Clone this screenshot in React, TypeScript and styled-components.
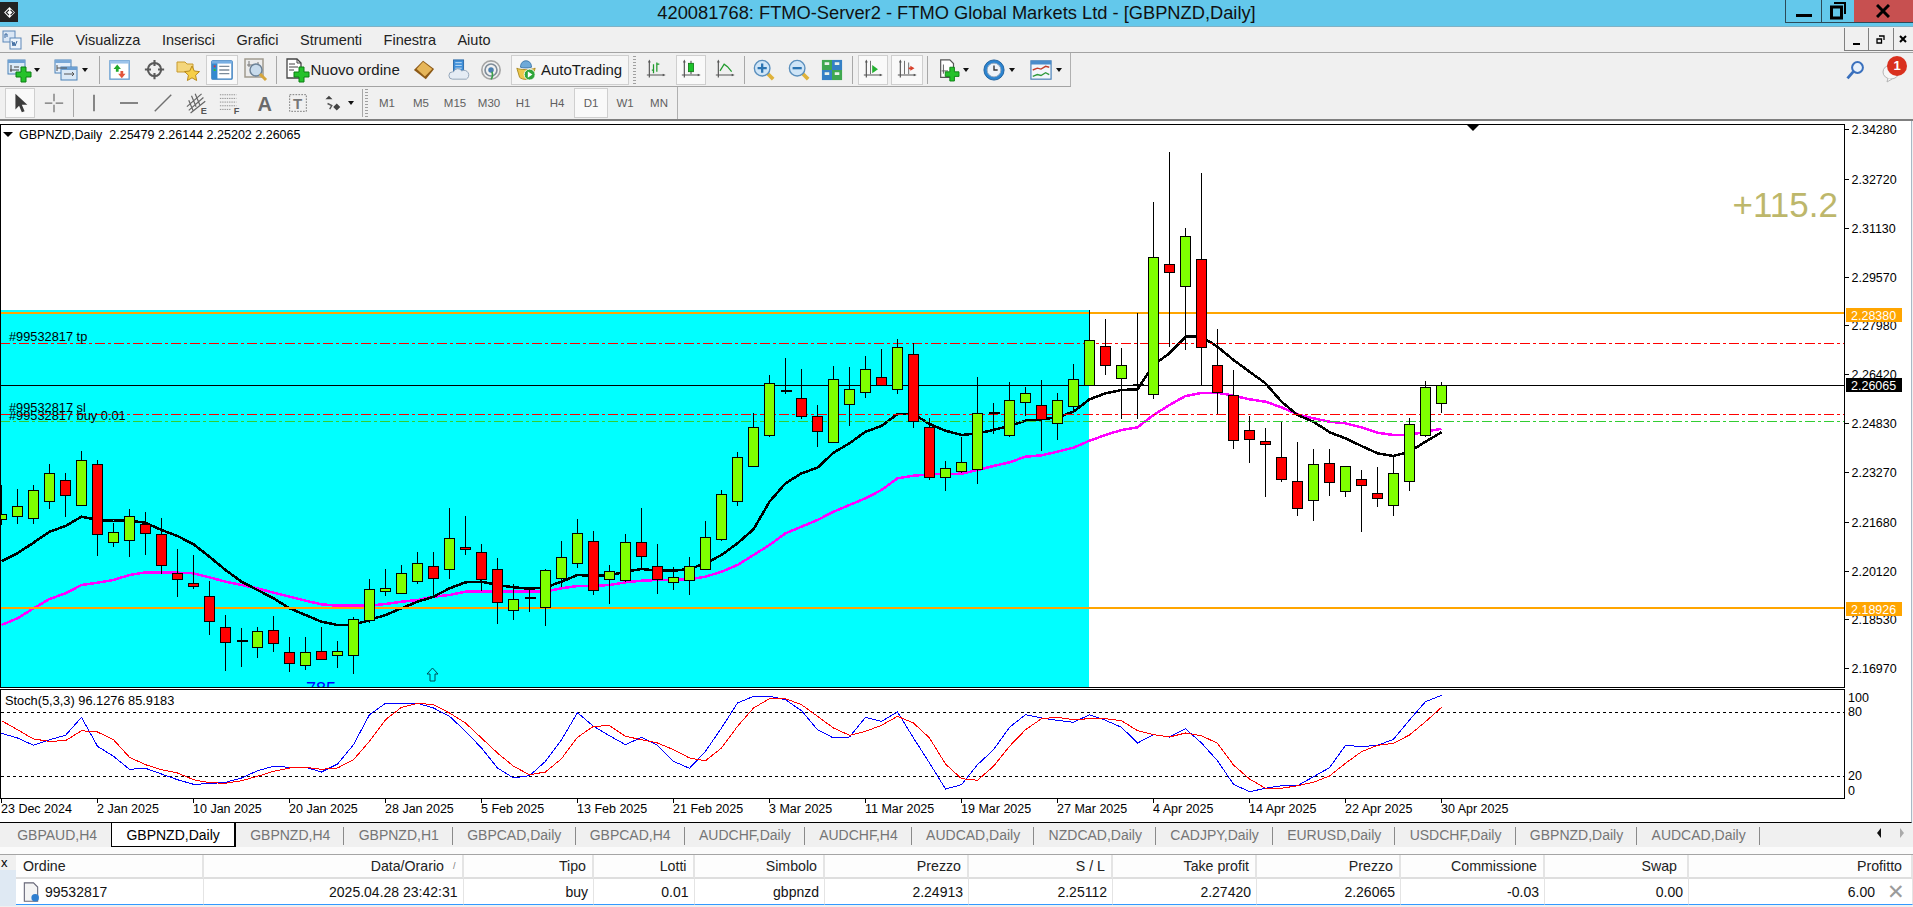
import React from 'react'
import styled, { createGlobalStyle } from 'styled-components'

const GlobalStyle = createGlobalStyle`
  html, body {
    margin: 0;
    padding: 0;
    width: 1913px;
    height: 907px;
    overflow: hidden;
    background: #f0f0f0;
    font-family: "Liberation Sans", Arial, sans-serif;
  }
  * { box-sizing: border-box; }
`

/* data was read off the chart, y = 300 + v / 3 */
type Candle = ['g' | 'r' | 'd', number, number, number, number]
const CANDLES: Candle[] = [
  ['g', 643, 656, 555, 675], ['g', 619, 649, 567, 672], ['g', 571, 655, 555, 672], ['g', 520, 604, 491, 628],
  ['r', 541, 586, 519, 651], ['g', 481, 616, 453, 616], ['r', 493, 703, 480, 768], ['g', 697, 727, 668, 741],
  ['g', 649, 721, 627, 771], ['r', 673, 700, 636, 765], ['r', 703, 796, 654, 822], ['r', 820, 838, 747, 891],
  ['r', 850, 859, 765, 866], ['r', 889, 964, 843, 1006], ['r', 982, 1027, 945, 1113], ['d', 1024, 1024, 984, 1101],
  ['g', 994, 1042, 981, 1074], ['r', 991, 1030, 948, 1056], ['r', 1057, 1090, 1011, 1116], ['g', 1057, 1096, 1011, 1110],
  ['r', 1054, 1078, 981, 1080], ['g', 1054, 1066, 1023, 1104], ['g', 958, 1066, 951, 1122], ['g', 868, 961, 837, 969],
  ['g', 865, 874, 807, 888], ['g', 820, 880, 795, 882], ['g', 790, 844, 756, 852], ['r', 799, 835, 756, 886],
  ['g', 715, 808, 624, 837], ['r', 742, 748, 648, 765], ['r', 757, 838, 732, 874], ['r', 808, 907, 774, 972],
  ['g', 898, 931, 853, 960], ['d', 894, 894, 860, 936], ['g', 811, 922, 808, 978], ['g', 772, 835, 723, 860],
  ['g', 700, 790, 657, 803], ['r', 724, 871, 693, 885], ['g', 814, 838, 795, 912], ['g', 727, 841, 702, 845],
  ['r', 727, 769, 624, 811], ['r', 799, 838, 732, 881], ['g', 832, 847, 801, 869], ['g', 799, 841, 771, 884],
  ['g', 712, 808, 663, 810], ['g', 583, 718, 570, 722], ['g', 472, 604, 457, 617], ['g', 382, 499, 340, 500],
  ['g', 250, 406, 225, 410], ['d', 272, 272, 175, 282], ['r', 295, 349, 207, 356], ['r', 349, 394, 315, 440],
  ['g', 238, 427, 198, 428], ['g', 268, 313, 201, 378], ['g', 208, 277, 168, 294], ['r', 232, 254, 148, 256],
  ['g', 142, 268, 117, 282], ['r', 163, 364, 130, 384], ['r', 382, 532, 355, 540], ['g', 505, 532, 484, 573],
  ['g', 487, 514, 412, 518], ['g', 340, 508, 232, 552], ['d', 339, 339, 309, 401], ['g', 301, 406, 247, 410],
  ['g', 280, 307, 262, 347], ['r', 316, 358, 241, 453], ['g', 301, 370, 280, 420], ['g', 238, 319, 193, 335],
  ['g', 121, 256, 30, 256], ['r', 139, 196, 57, 224], ['g', 196, 235, 144, 357], ['d', 254, 254, 38, 356],
  ['g', -128, 283, -294, 296], ['r', -107, -83, -444, 142], ['g', -191, -41, -216, 150], ['r', -122, 142, -380, 256],
  ['r', 196, 277, 87, 343], ['r', 286, 421, 210, 447], ['r', 391, 416, 348, 488], ['r', 423, 431, 385, 590],
  ['r', 472, 538, 365, 545], ['r', 544, 625, 427, 647], ['g', 493, 601, 447, 662], ['r', 490, 547, 447, 587],
  ['g', 499, 574, 499, 590], ['r', 538, 556, 511, 695], ['r', 580, 595, 501, 620], ['g', 520, 616, 467, 647],
  ['g', 373, 544, 355, 573], ['g', 262, 406, 244, 410], ['g', 256, 310, 247, 340],
]

const MA_FAST = [
  784, 760, 728, 695, 678, 650, 660, 662, 662, 668, 690, 708, 733, 770, 810, 845, 870, 895, 925, 945,
  965, 975, 975, 960, 945, 925, 905, 890, 865, 847, 845, 855, 862, 866, 862, 845, 825, 828, 826, 815,
  807, 812, 812, 807, 790, 765, 730, 688, 605, 550, 520, 503, 458, 430, 395, 378, 342, 342, 372, 392,
  405, 400, 390, 377, 362, 358, 352, 335, 298, 280, 270, 268, 195, 160, 110, 110, 140, 180, 215, 250,
  305, 345, 365, 397, 415, 438, 460, 468, 455, 425, 397,
]
const MA_SLOW = [
  975, 955, 925, 897, 880, 855, 848, 840, 825, 817, 817, 818, 820, 832, 845, 855, 865, 878, 890, 902,
  913, 917, 917, 917, 912, 905, 900, 890, 885, 875, 875, 875, 875, 875, 875, 865, 858, 858, 855, 847,
  842, 840, 840, 838, 830, 815, 795, 765, 735, 700, 680, 660, 635, 615, 595, 570, 535, 527, 523, 522,
  521, 510, 498, 487, 470, 466, 455, 443, 422, 405, 390, 382, 345, 315, 288, 279, 278, 287, 298, 305,
  322, 343, 355, 365, 370, 382, 398, 405, 405, 395, 386,
]

/* stochastic, y = 688 + v / 3 */
const STOCH_K = [
  136, 150, 172, 155, 142, 88, 175, 205, 244, 241, 258, 275, 289, 287, 283, 270, 248, 235, 238, 238,
  252, 228, 170, 80, 46, 46, 46, 60, 85, 130, 180, 240, 270, 263, 220, 155, 74, 115,
  143, 170, 148, 172, 220, 241, 190, 120, 45, 25, 25, 35, 68, 125, 150, 147, 88, 100, 72, 150,
  225, 303, 290, 230, 185, 118, 80, 90, 97, 103, 80, 97, 118, 165, 140, 147, 122, 165,
  218, 289, 311, 301, 293, 293, 266, 239, 172, 176, 172, 154, 96, 41, 22,
]
const STOCH_D = [
  98, 125, 153, 160, 158, 128, 132, 155, 208, 230, 245, 255, 275, 284, 286, 278, 265, 250, 240, 238,
  244, 240, 215, 160, 95, 58, 46, 50, 75, 105, 150, 195, 235, 260, 252, 212, 148, 115,
  113, 145, 155, 165, 185, 210, 218, 180, 115, 60, 32, 32, 50, 85, 120, 142, 130, 112, 85, 105,
  150, 228, 272, 277, 235, 175, 125, 92, 88, 95, 92, 92, 98, 128, 140, 147, 135, 143,
  166, 231, 273, 301, 301, 293, 283, 264, 226, 191, 172, 166, 141, 101, 58,
]

const PRICE_TICKS: [string, number][] = [
  ['2.34280', 129], ['2.32720', 179], ['2.31130', 228], ['2.29570', 277], ['2.27980', 325], ['2.26420', 374],
  ['2.24830', 423], ['2.23270', 472], ['2.21680', 522], ['2.20120', 571], ['2.18530', 619], ['2.16970', 668],
]
const PRICE_TAGS: [string, number, string][] = [
  ['2.28380', 308, '#ffa500'], ['2.26065', 378, '#000'], ['2.18926', 602, '#ffa500'],
]
const DATES = [
  '23 Dec 2024', '2 Jan 2025', '10 Jan 2025', '20 Jan 2025', '28 Jan 2025', '5 Feb 2025', '13 Feb 2025', '21 Feb 2025',
  '3 Mar 2025', '11 Mar 2025', '19 Mar 2025', '27 Mar 2025', '4 Apr 2025', '14 Apr 2025', '22 Apr 2025', '30 Apr 2025',
]
const MENU = ['File', 'Visualizza', 'Inserisci', 'Grafici', 'Strumenti', 'Finestra', 'Aiuto']
const TIMEFRAMES = ['M1', 'M5', 'M15', 'M30', 'H1', 'H4', 'D1', 'W1', 'MN']
const TABS = [
  'GBPAUD,H4', 'GBPNZD,Daily', 'GBPNZD,H4', 'GBPNZD,H1', 'GBPCAD,Daily', 'GBPCAD,H4', 'AUDCHF,Daily', 'AUDCHF,H4',
  'AUDCAD,Daily', 'NZDCAD,Daily', 'CADJPY,Daily', 'EURUSD,Daily', 'USDCHF,Daily', 'GBPNZD,Daily', 'AUDCAD,Daily',
]
const COLUMNS = [
  { title: 'Ordine', w: 188, left: true },
  { title: 'Data/Orario', w: 259.5, value: '2025.04.28 23:42:31' },
  { title: 'Tipo', w: 130.5, value: 'buy' },
  { title: 'Lotti', w: 100.5, value: '0.01' },
  { title: 'Simbolo', w: 130.5, value: 'gbpnzd' },
  { title: 'Prezzo', w: 144, value: '2.24913' },
  { title: 'S / L', w: 144, value: '2.25112' },
  { title: 'Take profit', w: 144, value: '2.27420' },
  { title: 'Prezzo', w: 144, value: '2.26065' },
  { title: 'Commissione', w: 144, value: '-0.03' },
  { title: 'Swap', w: 144, value: '0.00' },
  { title: 'Profitto', w: 224, value: '6.00' },
]

const candleX = (i: number) => 1.5 + 16 * i
const py = (v: number) => Math.round(300 + v / 3)
const linePoints = (values: number[], base: number) =>
  values.map((v, i) => `${candleX(i)},${(base + v / 3).toFixed(1)}`).join(' ')

const Page = styled.div`
  width: 1913px;
  height: 907px;
  display: flex;
  flex-direction: column;
  overflow: hidden;
  background: #f0f0f0;
  color: #000;
`

const TitleBar = styled.div`
  height: 27px;
  display: grid;
  grid-template-columns: 128px 1fr 128px;
  background: #63c8eb;
  border-bottom: 1px solid #7fb2c6;
`
const AppBadge = styled.div`
  width: 18px;
  height: 20px;
  margin-top: 2px;
  background: #222;
  display: flex;
  align-items: center;
  justify-content: center;
`
const TitleText = styled.div`
  text-align: center;
  font-size: 18.3px;
  line-height: 26px;
  color: #111;
  white-space: nowrap;
`
const WinButtons = styled.div`
  display: flex;
  height: 23px;
`
const WinButton = styled.div<{ $w: number; $close?: boolean }>`
  width: ${p => p.$w}px;
  display: flex;
  align-items: center;
  justify-content: center;
  background: ${p => (p.$close ? '#c75050' : 'transparent')};
  border-bottom: 1px solid #2c4a58;
  border-left: ${p => (p.$close ? 'none' : '1px solid #2c4a58')};
`

const MenuBar = styled.div`
  height: 26px;
  display: flex;
  align-items: center;
  padding-left: 2px;
  border-bottom: 1px solid #a3a3a3;
`
const MenuItems = styled.div`
  display: flex;
  gap: 21.5px;
  margin-left: 8.5px;
  font-size: 14.5px;
  color: #222;
`
const MdiButtons = styled.div`
  display: flex;
  margin-left: auto;
  align-self: flex-start;
  height: 23px;
  margin-top: 1px;
`
const MdiButton = styled.div<{ $w: number }>`
  width: ${p => p.$w}px;
  display: flex;
  align-items: center;
  justify-content: center;
  border: 1px solid #808080;
  border-top: none;
  border-right: none;
`

const ToolRow = styled.div`
  height: 34px;
  display: flex;
`
const ToolRowLast = styled(ToolRow)`
  border-bottom: 2px solid #7f7f7f;
`
const Band = styled.div<{ $w: number; $line?: boolean }>`
  width: ${p => p.$w}px;
  display: flex;
  align-items: center;
  padding-left: 3px;
  border-right: 1px solid #b0b0b0;
  border-bottom: ${p => (p.$line ? '1px solid #a3a3a3' : 'none')};
`
const ToolIcon = styled.div<{ $w: number; $ml?: number; $active?: boolean }>`
  width: ${p => p.$w}px;
  height: 30px;
  margin-left: ${p => p.$ml ?? 0}px;
  flex: none;
  display: flex;
  align-items: center;
  justify-content: center;
  background: ${p => (p.$active ? '#f9f9f9' : 'transparent')};
  border: 1px solid ${p => (p.$active ? '#cfcfcf' : 'transparent')};
`
const DropTool = styled(ToolIcon)<{ $pl: number; $gap: number }>`
  justify-content: flex-start;
  padding-left: ${p => p.$pl}px;
  gap: ${p => p.$gap}px;
  border: none;
`
const Caret = styled.span`
  width: 0;
  height: 0;
  flex: none;
  border-left: 3.5px solid transparent;
  border-right: 3.5px solid transparent;
  border-top: 4px solid #111;
`
const Sep = styled.div<{ $ml?: number }>`
  width: 1px;
  height: 28px;
  flex: none;
  margin-left: ${p => p.$ml ?? 0}px;
  background: #a8a8a8;
`
const Grip = styled.div<{ $ml?: number }>`
  width: 3px;
  height: 28px;
  flex: none;
  margin-left: ${p => p.$ml ?? 0}px;
  background: repeating-linear-gradient(to bottom, #a0a0a0 0 1px, transparent 1px 3px);
`
const OrderButton = styled.div`
  width: 125.5px;
  height: 30px;
  flex: none;
  display: flex;
  align-items: center;
  gap: 2px;
  padding-left: 8px;
  font-size: 15px;
  color: #1a1a1a;
  white-space: nowrap;
`
const AutoButton = styled.div`
  width: 117.5px;
  height: 30px;
  flex: none;
  display: flex;
  align-items: center;
  gap: 4px;
  padding-left: 3px;
  font-size: 15px;
  color: #1a1a1a;
  background: #f6f6f6;
  border: 1px solid #cfcfcf;
`
const RightTools = styled.div`
  margin-left: auto;
  display: flex;
  align-items: center;
  gap: 17px;
  padding-right: 5px;
`
const ChatBadge = styled.div`
  position: relative;
  width: 26px;
  height: 26px;
`
const ChatCount = styled.span`
  position: absolute;
  right: 1px;
  top: -1px;
  width: 20px;
  height: 20px;
  border-radius: 50%;
  background: #d9301e;
  color: #fff;
  font-size: 13px;
  font-weight: bold;
  line-height: 20px;
  text-align: center;
`
const TimeframeButton = styled.div<{ $active?: boolean }>`
  width: 34px;
  height: 30px;
  flex: none;
  display: flex;
  align-items: center;
  justify-content: center;
  font-size: 11.5px;
  color: #5f5f5f;
  background: ${p => (p.$active ? '#f9f9f9' : 'transparent')};
  border: 1px solid ${p => (p.$active ? '#cfcfcf' : 'transparent')};
`
const TimeframeGroup = styled.div`
  display: flex;
  margin-left: 2px;
`

const ChartWindow = styled.div`
  width: 1912px;
  height: 702px;
  flex: none;
  padding-top: 3px;
  background: #fff;
  border-bottom: 1.5px solid #000;
  border-right: 1px solid #a9bac6;
`
const Pane = styled.div<{ $h: number; $mt?: number }>`
  height: ${p => p.$h}px;
  margin-top: ${p => p.$mt ?? 0}px;
  display: flex;
`
const Plot = styled.svg`
  width: 1845px;
  height: 100%;
  flex: none;
  display: block;
`
const Axis = styled.svg`
  width: 66px;
  height: 100%;
  flex: none;
  display: block;
`
const ChartText = styled.text`
  font-family: "Liberation Sans", Arial, sans-serif;
  font-size: 12.5px;
  fill: #000;
  white-space: pre;
`
const OrderText = styled(ChartText)`
  font-size: 12.8px;
`
const BigText = styled(ChartText)`
  font-size: 35px;
  fill: #bdb76b;
`
const TimeAxis = styled.div`
  display: flex;
  height: 24px;
`
const TimeLabel = styled.div`
  width: 96px;
  flex: none;
  position: relative;
  padding: 3px 0 0 1px;
  font-size: 12.5px;
  white-space: nowrap;
  &::before {
    content: '';
    position: absolute;
    left: 1px;
    top: 0;
    width: 1px;
    height: 4px;
    background: #000;
  }
`

const TabBar = styled.div`
  height: 24px;
  flex: none;
  display: flex;
  padding-left: 3px;
  background: #f0f0f0;
`
const Tab = styled.div<{ $active?: boolean; $sep?: boolean }>`
  flex: none;
  padding: 0 14.2px;
  position: relative;
  font-size: 14px;
  line-height: 24px;
  white-space: nowrap;
  color: ${p => (p.$active ? '#000' : '#757575')};
  background: ${p => (p.$active ? '#fff' : 'transparent')};
  border: ${p => (p.$active ? '1px solid #000' : 'none')};
  border-top: none;
  border-right-width: ${p => (p.$active ? '2px' : '0')};
  &::after {
    content: '';
    display: ${p => (p.$sep ? 'block' : 'none')};
    position: absolute;
    right: 0;
    top: 4px;
    width: 1px;
    height: 18px;
    background: #8a8a8a;
  }
`
const TabArrows = styled.div`
  margin-left: auto;
  display: flex;
  align-items: center;
  gap: 19px;
  padding: 0 9px 4px 0;
`
const TabArrow = styled.span<{ $dir: 'left' | 'right' }>`
  width: 0;
  height: 0;
  border-top: 5px solid transparent;
  border-bottom: 5px solid transparent;
  ${p => (p.$dir === 'left' ? 'border-right: 4px solid #111;' : 'border-left: 4px solid #aaa;')}
`
const TabGap = styled.div`
  height: 7px;
  flex: none;
  background: #fbfbfb;
`

const TerminalPanel = styled.div`
  height: 52px;
  flex: none;
  display: flex;
  border-top: 1.5px solid #a5a5a5;
`
const SideStrip = styled.div`
  width: 16px;
  flex: none;
  display: flex;
  flex-direction: column;
  background: #f0f0f0;
`
const SideClose = styled.div`
  height: 15px;
  padding: 1px 0 0 1px;
  font-size: 13px;
  line-height: 13px;
`
const SideFill = styled.div`
  flex: 1;
  background: #dfe9f3;
`
const OrdersGrid = styled.div`
  flex: 1;
  display: grid;
  grid-template-columns: ${COLUMNS.map(c => `${c.w}px`).join(' ')};
  grid-template-rows: 24px 26px;
`
const HeadCell = styled.div<{ $left?: boolean; $pr?: number }>`
  display: flex;
  align-items: center;
  justify-content: ${p => (p.$left ? 'flex-start' : 'flex-end')};
  gap: 9px;
  padding: ${p => (p.$left ? '0 0 0 7px' : `0 ${p.$pr ?? 6}px 0 0`)};
  font-size: 14.2px;
  color: #222;
  background: #fdfdfd;
  border-right: 2px solid #e4e4e4;
  border-bottom: 2px solid #dedede;
`
const SortMark = styled.span`
  font-size: 9px;
  color: #777;
`
const RowCell = styled.div<{ $left?: boolean; $pr?: number }>`
  display: flex;
  align-items: center;
  justify-content: ${p => (p.$left ? 'flex-start' : 'flex-end')};
  gap: 4px;
  padding: ${p => (p.$left ? '0 0 0 5px' : `0 ${p.$pr ?? 5}px 0 0`)};
  font-size: 14px;
  color: #111;
  background: #fff;
  border-right: 1px solid #e4e4e4;
  border-bottom: 1.5px solid #3399ff;
`
const CloseMark = styled.span`
  margin-left: 8px;
  font-size: 21px;
  line-height: 20px;
  color: #9b9b9b;
`

const Ic = ({ size = 22, children }: { size?: number; children: React.ReactNode }) => (
  <svg width={size} height={size} viewBox="0 0 24 24" style={{ flex: 'none', display: 'block', overflow: 'visible' }}>
    {children}
  </svg>
)

const Plus = ({ x, y }: { x: number; y: number }) => (
  <path d={`M${x + 5} ${y}h5v5h5v5h-5v5h-5v-5h-5v-5h5z`} fill="#25c22b" stroke="#0c7f14" strokeWidth="1" />
)
const Axes = () => (
  <path d="M4 1v20M1 18h21M3 3l1-2 1 2M20 17l2 1-2 1" fill="none" stroke="#555" strokeWidth="1.4" />
)

const NewChartIcon = () => (
  <Ic size={24}>
    <rect x="1" y="2" width="17" height="14" fill="#dceaf7" stroke="#4a81b8" />
    <rect x="1" y="2" width="17" height="3" fill="#6da0d3" />
    <path d="M4 7v7M3 12h9M7 9h5" stroke="#444" fill="none" />
    <Plus x={9} y={9} />
  </Ic>
)
const ProfilesIcon = () => (
  <Ic size={24}>
    <rect x="1" y="2" width="16" height="13" fill="#e5effa" stroke="#4a81b8" />
    <rect x="1" y="2" width="16" height="3" fill="#7aa9d8" />
    <rect x="7" y="9" width="16" height="13" fill="#dbe9f6" stroke="#4a81b8" />
    <rect x="7" y="9" width="16" height="3" fill="#6da0d3" />
    <path d="M3 7v6M3 10h10M10 16h10M18 14l2 2-2 2" fill="none" stroke="#555" />
  </Ic>
)
const MarketWatchIcon = () => (
  <Ic>
    <rect x="1" y="2" width="21" height="20" fill="#fff" stroke="#6aa0d2" strokeWidth="1.5" />
    <rect x="1" y="2" width="21" height="3" fill="#9cc3ea" />
    <path d="M9 6l4 5h-2.5v3h-3v-3H5z" fill="#21a92b" />
    <path d="M14 21l-4-5h2.5v-3h3v3H18z" fill="#e2553b" />
  </Ic>
)
const NavigatorIcon = () => (
  <Ic size={21}>
    <circle cx="12" cy="12" r="7.5" fill="none" stroke="#595959" strokeWidth="2.4" />
    <path d="M12 1v7M12 16v7M1 12h7M16 12h7" stroke="#595959" strokeWidth="2.4" />
  </Ic>
)
const FavoritesIcon = () => (
  <Ic size={24}>
    <path d="M1 4h8l2 2h6v8H1z" fill="#f4d67c" stroke="#c79a2f" />
    <path d="M16 8l2.3 5 5.2.6-3.9 3.6 1 5.3-4.6-2.7-4.6 2.7 1-5.3-3.9-3.6 5.2-.6z" fill="#f7cf47" stroke="#b98a1d" />
  </Ic>
)
const TerminalIcon = () => (
  <Ic>
    <rect x="1" y="2" width="22" height="20" rx="1" fill="#fff" stroke="#2f78bd" strokeWidth="1.5" />
    <rect x="1" y="2" width="6" height="20" fill="#3489cf" />
    <rect x="1" y="2" width="22" height="3" fill="#77aee2" />
    <path d="M9 8h11M9 12h11M9 16h11" stroke="#7c8b99" strokeWidth="1.5" />
    <path d="M4 7v2" stroke="#d33" strokeWidth="2" />
    <path d="M4 11v2" stroke="#2c2" strokeWidth="2" />
  </Ic>
)
const TesterIcon = () => (
  <Ic size={24}>
    <rect x="1" y="1" width="18" height="18" fill="#ececec" stroke="#a09a8e" strokeWidth="1.5" />
    <path d="M5 3v6M3 7h7M14 4v3" stroke="#777" />
    <circle cx="12" cy="12" r="6" fill="#c8dbec" stroke="#6d8398" strokeWidth="1.5" />
    <path d="M16 16l6 6" stroke="#d6a63b" strokeWidth="3" />
  </Ic>
)
const OrderIcon = () => (
  <Ic size={24}>
    <path d="M2 1h10l4 4v15H2z" fill="#fff" stroke="#444" strokeWidth="1.3" />
    <path d="M12 1v4h4M4 6h6M4 9h9M4 12h5" fill="none" stroke="#444" />
    <Plus x={9} y={9} />
  </Ic>
)
const EditorIcon = () => (
  <Ic>
    <path d="M1 12L11 2l12 9-9 11z" fill="#8d5a17" />
    <path d="M4 11l7-8 10 8-8 8z" fill="#e6b65a" />
  </Ic>
)
const CloudIcon = () => (
  <Ic>
    <rect x="6" y="1" width="11" height="14" fill="#3f8fd8" stroke="#2b6aa8" />
    <path d="M8 4h7M8 7h7M8 10h7" stroke="#c9e3fa" />
    <path d="M5 22a4 4 0 010-8h1a5 5 0 019-1 5 5 0 015 9z" fill="#e5ecf4" stroke="#8da0b5" />
  </Ic>
)
const SignalsIcon = () => (
  <Ic>
    <circle cx="12" cy="12" r="10" fill="none" stroke="#a5a5a5" strokeWidth="1.8" />
    <circle cx="12" cy="12" r="6.5" fill="none" stroke="#7f8c99" strokeWidth="1.8" />
    <circle cx="12" cy="12" r="3" fill="#4b7fb0" />
    <path d="M13 14c1 3 1 6-1 8" fill="none" stroke="#3aa048" strokeWidth="1.8" />
  </Ic>
)
const AutoTradingIcon = () => (
  <Ic>
    <path d="M2 10c3 2 16 2 20 0l-3 10c-3 3-11 3-14 0z" fill="#edc84a" stroke="#a98820" />
    <path d="M6 9c0-5 3-7 6-7s6 2 6 7c-3 1-9 1-12 0z" fill="#6ea9d8" stroke="#3f79ab" />
    <circle cx="16" cy="17" r="6" fill="#2fa53a" stroke="#fff" />
    <path d="M14 13.5l5 3.5-5 3.5z" fill="#fff" />
  </Ic>
)
const BarsIcon = () => (
  <Ic size={20}>
    <Axes />
    <path d="M9 5v11M9 12h-2M13 3v11M13 5h3" stroke="#1f9a2b" strokeWidth="1.5" fill="none" />
  </Ic>
)
const CandleIcon = () => (
  <Ic size={20}>
    <Axes />
    <path d="M12 1v16" stroke="#222" />
    <rect x="9" y="4" width="6" height="10" fill="#1bc229" stroke="#0d7a15" />
  </Ic>
)
const LineIcon = () => (
  <Ic size={20}>
    <Axes />
    <path d="M6 13l5-8 4 3 5 6" fill="none" stroke="#1f9a2b" strokeWidth="1.5" />
  </Ic>
)
const ZoomIcon = ({ plus }: { plus?: boolean }) => (
  <Ic>
    <path d="M15 15l7 7" stroke="#dfb23b" strokeWidth="4" />
    <circle cx="10" cy="10" r="8.5" fill="#cfe5f7" stroke="#5a8fbd" strokeWidth="1.5" />
    <path d={plus ? 'M5 10h10M10 5v10' : 'M5 10h10'} stroke="#2b74b2" strokeWidth="2.5" />
  </Ic>
)
const TileIcon = () => (
  <Ic>
    <rect x="1" y="1" width="11" height="11" fill="#3fa850" />
    <rect x="12" y="1" width="11" height="11" fill="#3480c5" />
    <rect x="1" y="12" width="11" height="11" fill="#3480c5" />
    <rect x="12" y="12" width="11" height="11" fill="#3fa850" />
    <path d="M4 5h5M15 5h5M4 16h5M15 16h5" stroke="#e9f2ea" strokeWidth="3" />
  </Ic>
)
const ScrollIcon = () => (
  <Ic size={20}>
    <Axes />
    <path d="M9 1v16" stroke="#555" />
    <path d="M11 6l7 5-7 5z" fill="#25b232" />
  </Ic>
)
const ShiftIcon = () => (
  <Ic size={20}>
    <Axes />
    <path d="M9 1v16M14 3v14" stroke="#555" />
    <path d="M21 10l-5-3v2h-2v2h2v2z" fill="#d8402b" />
  </Ic>
)
const IndicatorsIcon = () => (
  <Ic>
    <path d="M4 1h10l4 4v15H4z" fill="#fff" stroke="#555" strokeWidth="1.3" />
    <path d="M7 6v10M5 13h7" fill="none" stroke="#555" />
    <Plus x={9} y={9} />
  </Ic>
)
const ClockIcon = () => (
  <Ic>
    <circle cx="12" cy="12" r="11" fill="#2c84d0" stroke="#1c5f9b" />
    <circle cx="12" cy="12" r="7.5" fill="#eef3f8" stroke="#9ab" />
    <path d="M12 7v5h4" fill="none" stroke="#333" strokeWidth="1.5" />
  </Ic>
)
const TemplateIcon = () => (
  <Ic>
    <rect x="1" y="2" width="22" height="20" fill="#f2f6fb" stroke="#4a81b8" strokeWidth="1.3" />
    <rect x="1" y="2" width="22" height="4" fill="#4a8ccb" />
    <path d="M3 12l5-2 4 1 5-3 4 1" fill="none" stroke="#c23c2a" strokeWidth="1.5" />
    <path d="M3 19l5-2 4 1 5-3 4 2" fill="none" stroke="#2f9a3c" strokeWidth="1.5" />
  </Ic>
)

const CursorIcon = () => (
  <Ic size={22}>
    <path d="M7 2v17l4-4 3 7 3-1-3-7h6z" fill="#3c3c3c" />
  </Ic>
)
const CrossIcon = () => (
  <Ic size={20}>
    <path d="M12 1v9M12 14v9M1 12h9M14 12h9" stroke="#707070" strokeWidth="1.5" />
  </Ic>
)
const VLineIcon = () => (
  <Ic size={20}>
    <path d="M12 2v20" stroke="#707070" strokeWidth="2" />
  </Ic>
)
const HLineIcon = () => (
  <Ic size={18}>
    <path d="M0 12h24" stroke="#606060" strokeWidth="2" />
  </Ic>
)
const TrendIcon = () => (
  <Ic size={18}>
    <path d="M1 23L23 1" stroke="#707070" strokeWidth="2" />
  </Ic>
)
const ChannelIcon = () => (
  <Ic size={22}>
    <path d="M1 16L17 2M3 20L19 6M5 23L21 10M6 4l5 12M10 2l5 12M3 9l5 12" stroke="#666" fill="none" strokeWidth="1.3" />
    <text x="16" y="24" fontSize="10" fontWeight="bold" fill="#555" fontFamily="Liberation Sans">E</text>
  </Ic>
)
const FiboIcon = () => (
  <Ic size={22}>
    <path d="M1 3h18M1 7h18M1 11h18M1 15h18M1 19h12" stroke="#8a8a8a" strokeDasharray="1.5 1" fill="none" />
    <text x="16" y="24" fontSize="10" fontWeight="bold" fill="#555" fontFamily="Liberation Sans">F</text>
  </Ic>
)
const TextToolIcon = () => (
  <Ic size={20}>
    <text x="3" y="21" fontSize="24" fontWeight="bold" fill="#6a6a6a" fontFamily="Liberation Sans">A</text>
  </Ic>
)
const LabelToolIcon = () => (
  <Ic size={20}>
    <rect x="2" y="2" width="20" height="20" fill="none" stroke="#666" strokeDasharray="2 1.5" />
    <text x="6" y="19" fontSize="18" fontWeight="bold" fill="#777" fontFamily="Liberation Sans">T</text>
  </Ic>
)
const ShapesIcon = () => (
  <Ic size={17}>
    <path d="M7 1l5 5H2zM18 12l5 5-5 5-5-5z" fill="#444" />
    <path d="M5 12l6 3-3 5" fill="none" stroke="#555" strokeWidth="2" />
  </Ic>
)
const SearchIcon = () => (
  <Ic size={20}>
    <circle cx="15" cy="9" r="6.5" fill="#e8f1fb" stroke="#3a70bd" strokeWidth="2.4" />
    <path d="M10 14l-7 8" stroke="#3a70bd" strokeWidth="3.4" />
  </Ic>
)

function PriceChart() {
  return (
    <Plot viewBox="0 124 1845 564">
      <rect x="0" y="310" width="1089" height="378" fill="#00ffff" />

      <polyline points={linePoints(MA_SLOW, 300)} fill="none" stroke="#ff00ff" strokeWidth="2.5" shapeRendering="crispEdges" />
      <polyline points={linePoints(MA_FAST, 300)} fill="none" stroke="#000" strokeWidth="2.5" shapeRendering="crispEdges" />

      <g shapeRendering="crispEdges">
        <rect x="0" y="312" width="1845" height="2" fill="#ffa500" />
        <rect x="0" y="607" width="1845" height="2" fill="#ffa500" />
        <rect x="0" y="385" width="1845" height="1" fill="#000" />
        <line x1="0" x2="1845" y1="343.5" y2="343.5" stroke="#ff0000" strokeDasharray="10 3 3 3" />
        <line x1="0" x2="1845" y1="414.5" y2="414.5" stroke="#ff0000" strokeDasharray="10 3 3 3" />
        <line x1="0" x2="1845" y1="421.5" y2="421.5" stroke="#32cd32" strokeDasharray="10 3 3 3" />

        {CANDLES.map(([kind, top, bottom, high, low], i) => {
          const x = candleX(i)
          return (
            <g key={i}>
              <rect x={x - 0.5} y={py(high)} width="1" height={py(low) - py(high)} fill="#000" />
              {kind === 'd' ? (
                <rect x={x - 5} y={py(top) - 1} width="11" height="2" fill="#000" />
              ) : (
                <rect
                  x={x - 5}
                  y={py(top) + 0.5}
                  width="10"
                  height={py(bottom) - py(top)}
                  fill={kind === 'g' ? '#7fff00' : '#ff0000'}
                  stroke="#000"
                />
              )}
            </g>
          )
        })}
      </g>

      <OrderText x="9" y="340.5">#99532817 tp</OrderText>
      <OrderText x="9" y="412">#99532817 sl</OrderText>
      <OrderText x="9" y="419.5">#99532817 buy 0.01</OrderText>
      <ChartText x="19" y="139">GBPNZD,Daily  2.25479 2.26144 2.25202 2.26065</ChartText>
      <path d="M3 132h10l-5 5z" fill="#000" />
      <path d="M1467 125h12l-6 6z" fill="#000" />
      <BigText x="1838" y="217" textAnchor="end">+115.2</BigText>
      <text x="306" y="695" fontSize="18" fill="#0000ff" fontFamily="Liberation Sans">785</text>
      <path d="M432.5 668l5.5 6h-3v7h-5v-7h-3z" fill="#00ffff" stroke="#004a55" />

      <g shapeRendering="crispEdges">
        <rect x="0" y="124" width="1845" height="1" fill="#000" />
        <rect x="0" y="124" width="1" height="564" fill="#000" />
        <rect x="1844" y="124" width="1" height="564" fill="#000" />
        <rect x="0" y="687" width="1845" height="1" fill="#000" />
      </g>
    </Plot>
  )
}

function PriceAxis() {
  return (
    <Axis viewBox="1845 124 66 564">
      {PRICE_TICKS.map(([label, y]) => (
        <g key={label}>
          <rect x="1845" y={y} width="4" height="1" fill="#000" shapeRendering="crispEdges" />
          <ChartText x="1851.5" y={y + 5}>{label}</ChartText>
        </g>
      ))}
      {PRICE_TAGS.map(([label, y, color]) => (
        <g key={label}>
          <rect x="1846" y={y} width="56" height="14" fill={color} />
          <ChartText x="1851" y={y + 12} style={{ fill: '#fff' }}>{label}</ChartText>
        </g>
      ))}
    </Axis>
  )
}

function StochChart() {
  return (
    <Plot viewBox="0 689 1845 110">
      <g shapeRendering="crispEdges">
        <line x1="1" x2="1844" y1="712.5" y2="712.5" stroke="#000" strokeDasharray="3 3" />
        <line x1="1" x2="1844" y1="776.5" y2="776.5" stroke="#000" strokeDasharray="3 3" />
        <polyline points={linePoints(STOCH_K, 688)} fill="none" stroke="#0000ff" />
        <polyline points={linePoints(STOCH_D, 688)} fill="none" stroke="#ff0000" />
        <rect x="0" y="689" width="1845" height="1" fill="#000" />
        <rect x="0" y="689" width="1" height="110" fill="#000" />
        <rect x="1844" y="689" width="1" height="110" fill="#000" />
        <rect x="0" y="798" width="1845" height="1" fill="#000" />
      </g>
      <OrderText x="5" y="705">Stoch(5,3,3) 96.1276 85.9183</OrderText>
    </Plot>
  )
}

function StochAxis() {
  const labels: [string, number][] = [['100', 697], ['80', 711], ['20', 775], ['0', 790]]
  return (
    <Axis viewBox="1845 689 66 110">
      {labels.map(([label, y]) => (
        <ChartText key={label} x="1848" y={y + 5}>{label}</ChartText>
      ))}
    </Axis>
  )
}

export default function App() {
  return (
    <Page>
      <GlobalStyle />
      <TitleBar>
        <div>
          <AppBadge>
            <Ic size={13}>
              <path d="M12 2l10 10-10 10L2 12z" fill="#fff" />
              <path d="M11 7l-5 5 5 5M14 7l5 5-5 5" fill="none" stroke="#222" strokeWidth="2" />
            </Ic>
          </AppBadge>
        </div>
        <TitleText>420081768: FTMO-Server2 - FTMO Global Markets Ltd - [GBPNZD,Daily]</TitleText>
        <WinButtons>
          <WinButton $w={36}>
            <svg width="16" height="3" style={{ marginTop: 8 }}><rect width="16" height="3" fill="#000" /></svg>
          </WinButton>
          <WinButton $w={32.5}>
            <svg width="16" height="18" viewBox="0 0 16 18">
              <path d="M4 1h11v11" fill="none" stroke="#000" strokeWidth="2" />
              <rect x="1.5" y="5" width="10" height="11" fill="none" stroke="#000" strokeWidth="3" />
            </svg>
          </WinButton>
          <WinButton $w={59.5} $close>
            <svg width="14" height="14" viewBox="0 0 14 14">
              <path d="M1 1l12 12M13 1L1 13" stroke="#000" strokeWidth="3" />
            </svg>
          </WinButton>
        </WinButtons>
      </TitleBar>

      <MenuBar>
        <svg width="20" height="20" viewBox="0 0 20 20">
          <rect x="1" y="1" width="12" height="11" fill="#dbe7f5" stroke="#5c87b8" />
          <rect x="8" y="8" width="11" height="11" fill="#eef4fb" stroke="#5c87b8" />
          <path d="M3 8V4h2v3M10 11l1 5 1-4 1 4 2-5" fill="none" stroke="#39679d" />
        </svg>
        <MenuItems>
          {MENU.map(item => <span key={item}>{item}</span>)}
        </MenuItems>
        <MdiButtons>
          <MdiButton $w={24}>
            <svg width="7" height="2" style={{ marginTop: 9 }}><rect width="7" height="2" fill="#000" /></svg>
          </MdiButton>
          <MdiButton $w={24.5}>
            <svg width="9" height="9" viewBox="0 0 9 9">
              <path d="M3 1h5v4M1 4h4.5v4H1z" fill="none" stroke="#000" strokeWidth="1.3" />
            </svg>
          </MdiButton>
          <MdiButton $w={20.5}>
            <svg width="8" height="8" viewBox="0 0 8 8">
              <path d="M1 1l6 6M7 1L1 7" stroke="#000" strokeWidth="2" />
            </svg>
          </MdiButton>
        </MdiButtons>
      </MenuBar>

      <ToolRow>
        <Band $w={1071} $line>
          <DropTool $w={44} $pl={4} $gap={3}><NewChartIcon /><Caret /></DropTool>
          <DropTool $w={46} $pl={7} $gap={4}><ProfilesIcon /><Caret /></DropTool>
          <Sep $ml={6} />
          <ToolIcon $w={39}><MarketWatchIcon /></ToolIcon>
          <ToolIcon $w={31.5}><NavigatorIcon /></ToolIcon>
          <ToolIcon $w={34}><FavoritesIcon /></ToolIcon>
          <ToolIcon $w={31.5} $ml={1.5} $active><TerminalIcon /></ToolIcon>
          <ToolIcon $w={37}><TesterIcon /></ToolIcon>
          <Sep $ml={1} />
          <OrderButton><OrderIcon /><span>Nuovo ordine</span></OrderButton>
          <ToolIcon $w={44}><EditorIcon /></ToolIcon>
          <ToolIcon $w={25}><CloudIcon /></ToolIcon>
          <ToolIcon $w={40}><SignalsIcon /></ToolIcon>
          <AutoButton><AutoTradingIcon /><span>AutoTrading</span></AutoButton>
          <Grip $ml={4} />
          <ToolIcon $w={39} $ml={1}><BarsIcon /></ToolIcon>
          <ToolIcon $w={30.5} $active><CandleIcon /></ToolIcon>
          <ToolIcon $w={38}><LineIcon /></ToolIcon>
          <Sep />
          <ToolIcon $w={38}><ZoomIcon plus /></ToolIcon>
          <ToolIcon $w={31}><ZoomIcon /></ToolIcon>
          <ToolIcon $w={36}><TileIcon /></ToolIcon>
          <Sep $ml={2} />
          <ToolIcon $w={30.5} $ml={4.5} $active><ScrollIcon /></ToolIcon>
          <ToolIcon $w={31.5} $ml={3} $active><ShiftIcon /></ToolIcon>
          <Sep $ml={4} />
          <DropTool $w={47} $pl={9} $gap={4}><IndicatorsIcon /><Caret /></DropTool>
          <DropTool $w={47} $pl={8} $gap={4}><ClockIcon /><Caret /></DropTool>
          <DropTool $w={43} $pl={8} $gap={4}><TemplateIcon /><Caret /></DropTool>
        </Band>
        <RightTools>
          <SearchIcon />
          <ChatBadge>
            <svg width="26" height="26" viewBox="0 0 26 26">
              <ellipse cx="9" cy="15" rx="8" ry="7" fill="#f6f6f6" stroke="#b5b5b5" />
              <path d="M6 21l-1 4 5-3" fill="#f6f6f6" stroke="#b5b5b5" />
            </svg>
            <ChatCount>1</ChatCount>
          </ChatBadge>
        </RightTools>
      </ToolRow>

      <ToolRowLast>
        <Band $w={678}>
          <ToolIcon $w={30} $ml={2} $active><CursorIcon /></ToolIcon>
          <ToolIcon $w={38}><CrossIcon /></ToolIcon>
          <Sep />
          <ToolIcon $w={40}><VLineIcon /></ToolIcon>
          <ToolIcon $w={29}><HLineIcon /></ToolIcon>
          <ToolIcon $w={39}><TrendIcon /></ToolIcon>
          <ToolIcon $w={29}><ChannelIcon /></ToolIcon>
          <ToolIcon $w={38}><FiboIcon /></ToolIcon>
          <ToolIcon $w={31}><TextToolIcon /></ToolIcon>
          <ToolIcon $w={36}><LabelToolIcon /></ToolIcon>
          <DropTool $w={46} $pl={8} $gap={7}><ShapesIcon /><Caret /></DropTool>
          <Sep />
          <Grip $ml={2} />
          <TimeframeGroup>
            {TIMEFRAMES.map(tf => (
              <TimeframeButton key={tf} $active={tf === 'D1'}>{tf}</TimeframeButton>
            ))}
          </TimeframeGroup>
        </Band>
      </ToolRowLast>

      <ChartWindow>
        <Pane $h={564}>
          <PriceChart />
          <PriceAxis />
        </Pane>
        <Pane $h={110} $mt={1}>
          <StochChart />
          <StochAxis />
        </Pane>
        <TimeAxis>
          {DATES.map(d => <TimeLabel key={d}>{d}</TimeLabel>)}
        </TimeAxis>
      </ChartWindow>

      <TabBar>
        {TABS.map((t, i) => (
          <Tab key={`${t}${i}`} $active={i === 1} $sep={i > 1}>{t}</Tab>
        ))}
        <TabArrows>
          <TabArrow $dir="left" />
          <TabArrow $dir="right" />
        </TabArrows>
      </TabBar>
      <TabGap />

      <TerminalPanel>
        <SideStrip>
          <SideClose>x</SideClose>
          <SideFill />
        </SideStrip>
        <OrdersGrid>
          {COLUMNS.map((c, i) => (
            <HeadCell key={i} $left={c.left} $pr={c.title === 'Swap' ? 10 : c.title === 'Profitto' ? 9 : 6}>
              {c.title}
              {c.title === 'Data/Orario' && <SortMark>/</SortMark>}
            </HeadCell>
          ))}
          {COLUMNS.map((c, i) => (
            <RowCell key={i} $left={c.left} $pr={c.title === 'Profitto' ? 7 : 5}>
              {c.left ? (
                <>
                  <Ic size={20}>
                    <path d="M4 1h11l5 5v17H4z" fill="#f4f4f4" stroke="#667" strokeWidth="1.3" />
                    <circle cx="17" cy="19" r="4.5" fill="#2f7fd0" />
                  </Ic>
                  <span>99532817</span>
                </>
              ) : (
                c.value
              )}
              {c.title === 'Profitto' && <CloseMark>✕</CloseMark>}
            </RowCell>
          ))}
        </OrdersGrid>
      </TerminalPanel>
    </Page>
  )
}
